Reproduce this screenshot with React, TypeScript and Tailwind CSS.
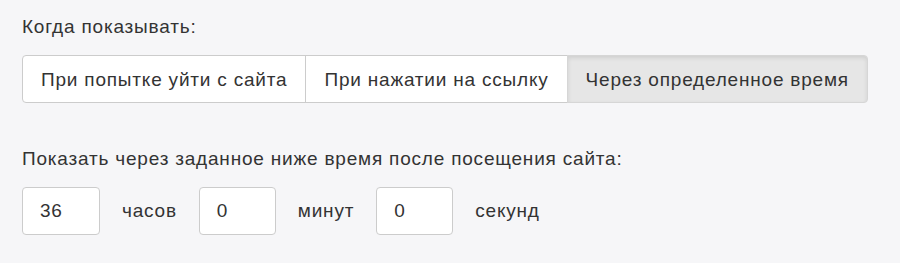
export default function App() {
  const options = ['При попытке уйти с сайта', 'При нажатии на ссылку', 'Через определенное время'];
  const active = 2;

  return (
    <div
      className="min-h-[263px] w-[900px] bg-[#f6f6f8] px-[22px] pt-[15px] text-[19px] tracking-[0.8px] text-[#333333]"
      style={{ fontFamily: '"Liberation Sans", Arial, sans-serif' }}
    >
      <p className="leading-[24px]">Когда показывать:</p>

      <div className="mt-[16px] flex">
        {options.map((label, i) => (
          <button
            key={label}
            type="button"
            className={
              'h-[48px] border px-[18px] leading-none ' +
              (i === 0 ? 'rounded-l-[4px] ' : '') +
              (i === options.length - 1 ? 'rounded-r-[4px] ' : '') +
              (i > 0 ? '-ml-px ' : '') +
              (i === active
                ? 'relative border-[#d6d6d6] bg-[#e6e6e6] shadow-[inset_0_2px_4px_rgba(0,0,0,0.1)]'
                : 'border-[#cccccc] bg-white')
            }
          >
            {label}
          </button>
        ))}
      </div>

      <p className="mt-[44px] leading-[24px]">Показать через заданное ниже время после посещения сайта:</p>

      <div className="mt-[16px] flex items-center gap-[22px]">
        <input
          defaultValue="36"
          className="h-[48px] w-[78px] rounded-[4px] border border-[#cccccc] bg-white px-[17px] outline-none"
        />
        <span>часов</span>
        <input
          defaultValue="0"
          className="h-[48px] w-[77px] rounded-[4px] border border-[#cccccc] bg-white px-[17px] outline-none"
        />
        <span>минут</span>
        <input
          defaultValue="0"
          className="h-[48px] w-[77px] rounded-[4px] border border-[#cccccc] bg-white px-[17px] outline-none"
        />
        <span>секунд</span>
      </div>
    </div>
  );
}
